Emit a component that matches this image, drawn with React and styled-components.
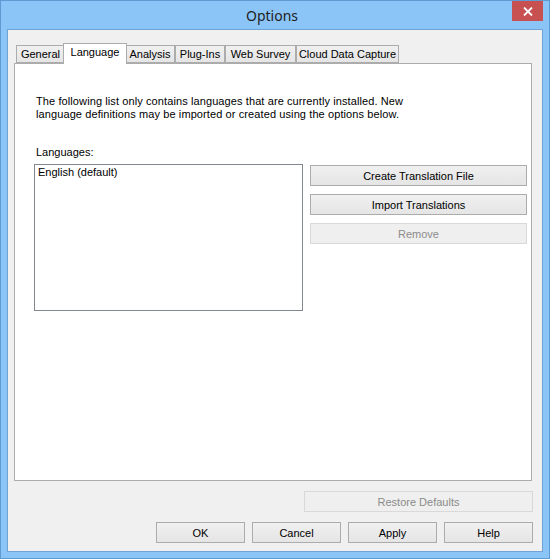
import React from "react";
import styled, { createGlobalStyle } from "styled-components";

const GlobalStyle = createGlobalStyle`
  html, body {
    margin: 0;
    padding: 0;
    overflow: hidden;
    background: #ffffff;
  }
  * {
    box-sizing: border-box;
  }
`;

const tabs = [
  { label: "General", width: 49 },
  { label: "Language", width: 64, active: true },
  { label: "Analysis", width: 50 },
  { label: "Plug-Ins", width: 50 },
  { label: "Web Survey", width: 71 },
  { label: "Cloud Data Capture", width: 103 },
];

const App = () => {
  return (
    <>
      <GlobalStyle />
      <Window>
        <TitleBar>
          <span />
          <Title>Options</Title>
          <CloseButton aria-label="Close">
            <svg width="10" height="9" viewBox="0 0 10 9">
              <path d="M1 0.5 L9 8.5 M9 0.5 L1 8.5" stroke="#fff" strokeWidth="1.8" />
            </svg>
          </CloseButton>
        </TitleBar>
        <Client>
          <TabStrip>
            {tabs.map(t => (
              <Tab key={t.label} $width={t.width} $active={t.active}>
                {t.label}
              </Tab>
            ))}
          </TabStrip>
          <Panel>
            <Description>
              The following list only contains languages that are currently installed. New
              <br />
              language definitions may be imported or created using the options below.
            </Description>
            <Label>Languages:</Label>
            <ListRow>
              <ListBox>
                <ListItem>English (default)</ListItem>
              </ListBox>
              <ButtonColumn>
                <Button>Create Translation File</Button>
                <Button>Import Translations</Button>
                <Button disabled>Remove</Button>
              </ButtonColumn>
            </ListRow>
          </Panel>
          <RestoreRow>
            <Button disabled $width={229}>
              Restore Defaults
            </Button>
          </RestoreRow>
          <Footer>
            <Button $width={89}>OK</Button>
            <Button $width={89}>Cancel</Button>
            <Button $width={89}>Apply</Button>
            <Button $width={89}>Help</Button>
          </Footer>
        </Client>
      </Window>
    </>
  );
};

export default App;

const Window = styled.div`
  width: 550px;
  height: 559px;
  background: #8bc4f6;
  border: 1px solid #5f9bd2;
  padding: 0 6px 6px 6px;
  display: flex;
  flex-direction: column;
`;

const TitleBar = styled.div`
  height: 28px;
  display: grid;
  grid-template-columns: 1fr auto 1fr;
  align-items: start;
  margin: 0 -6px;
  padding-right: 6px;
`;

const Title = styled.div`
  font-family: "Noto Sans", "Open Sans", sans-serif;
  font-size: 14px;
  line-height: 20px;
  margin-top: 5px;
  color: #1e1e1e;
`;

const CloseButton = styled.div`
  justify-self: end;
  width: 31px;
  height: 20px;
  background: #c75050;
  display: flex;
  align-items: center;
  justify-content: center;
`;

const Client = styled.div`
  flex: 1;
  background: #f0f0f0;
  border: 1px solid #6fa3d6;
  padding: 13px 9px 8px 6px;
  display: flex;
  flex-direction: column;
  font-family: "Liberation Sans", Arial, sans-serif;
  font-size: 11px;
  color: #000;
`;

const TabStrip = styled.div`
  height: 20px;
  display: flex;
  align-items: flex-end;
  padding-left: 2px;
`;

const Tab = styled.div`
  width: ${p => p.$width}px;
  height: ${p => (p.$active ? 21 : 18)}px;
  margin: ${p => (p.$active ? "0 -2px -1px -2px" : "0")};
  position: relative;
  z-index: ${p => (p.$active ? 2 : 1)};
  border: 1px solid #acacac;
  border-bottom: ${p => (p.$active ? "none" : "1px solid #acacac")};
  background: ${p =>
    p.$active ? "#ffffff" : "linear-gradient(#f0f0f0, #e5e5e5)"};
  display: flex;
  justify-content: center;
  align-items: ${p => (p.$active ? "flex-start" : "center")};
  padding-top: ${p => (p.$active ? "2px" : "0")};
  white-space: nowrap;
  line-height: 13px;
`;

const Panel = styled.div`
  height: 418px;
  margin-right: 1px;
  background: #ffffff;
  border: 1px solid #acacac;
  padding: 31px 0 0 19px;
  display: flex;
  flex-direction: column;
`;

const Description = styled.div`
  line-height: 13px;
  margin-left: 2px;
  letter-spacing: 0.1px;
  white-space: nowrap;
`;

const Label = styled.div`
  line-height: 13px;
  margin: 25px 0 0 2px;
`;

const ListRow = styled.div`
  display: flex;
  gap: 7px;
  margin-top: 5px;
`;

const ListBox = styled.div`
  width: 269px;
  height: 147px;
  border: 1px solid #828790;
  background: #fff;
  padding: 1px 3px;
`;

const ListItem = styled.div`
  line-height: 13px;
`;

const ButtonColumn = styled.div`
  display: flex;
  flex-direction: column;
  gap: 8px;
  margin-top: 1px;
`;

const Button = styled.button`
  width: ${p => p.$width || 217}px;
  height: 21px;
  padding: 0;
  font-family: "Liberation Sans", Arial, sans-serif;
  font-size: 11px;
  color: ${p => (p.disabled ? "#8b8b8b" : "#000")};
  border: 1px solid ${p => (p.disabled ? "#d9d9d9" : "#acacac")};
  background: ${p =>
    p.disabled ? "#efefef" : "linear-gradient(#f0f0f0, #e5e5e5)"};
  border-radius: 0;
`;

const RestoreRow = styled.div`
  display: flex;
  justify-content: flex-end;
  margin-top: 10px;
`;

const Footer = styled.div`
  display: flex;
  justify-content: flex-end;
  gap: 7px;
  margin-top: 10px;
`;
